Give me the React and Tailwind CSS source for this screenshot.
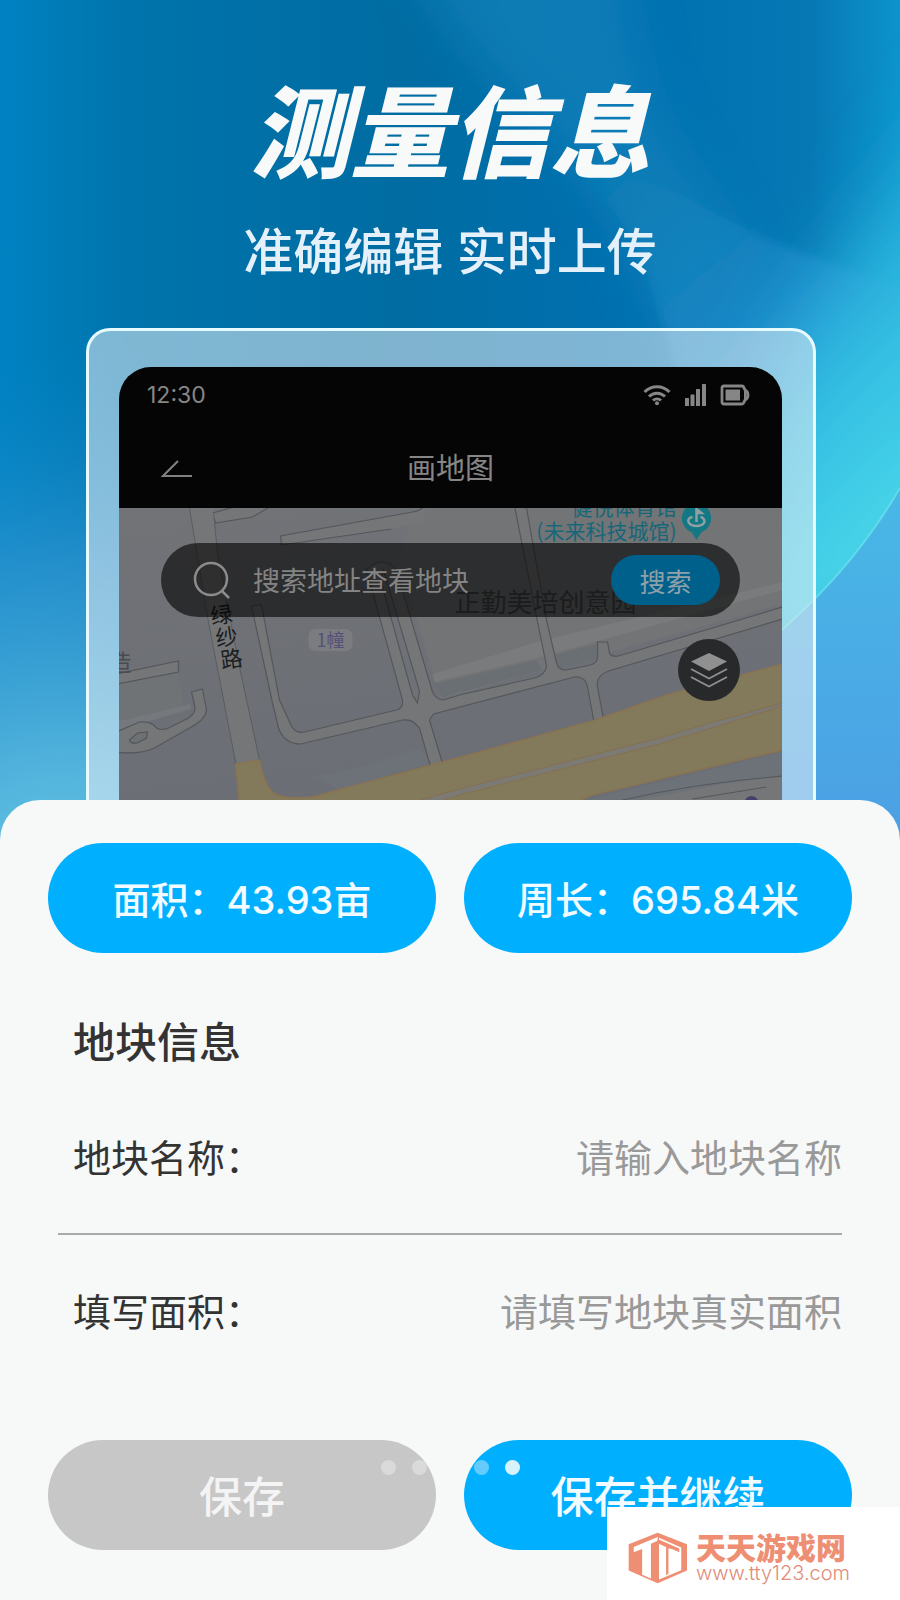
import React, { useState } from "react";

const DOTS = [0, 1, 2, 3, 4];

function Backdrop() {
  return (
    <svg
      className="absolute inset-x-0 top-0 h-[860px] w-full"
      viewBox="0 0 900 860"
      preserveAspectRatio="none"
      aria-hidden="true"
    >
      <defs>
        <linearGradient id="bg-base" x1="0" y1="0" x2="1" y2="0">
          <stop offset="0" stopColor="#0082c2" />
          <stop offset="0.14" stopColor="#0074ac" />
          <stop offset="0.45" stopColor="#006ca2" />
          <stop offset="0.7" stopColor="#0070b0" />
          <stop offset="0.9" stopColor="#0678b4" />
          <stop offset="1" stopColor="#0c94cc" />
        </linearGradient>
        <radialGradient id="bg-left" gradientUnits="userSpaceOnUse" cx="60" cy="900" r="560">
          <stop offset="0" stopColor="#6cc8e4" />
          <stop offset="0.25" stopColor="#50b2dc" />
          <stop offset="0.6" stopColor="#2c94d0" stopOpacity="0.8" />
          <stop offset="1" stopColor="#0080c4" stopOpacity="0" />
        </radialGradient>
        <linearGradient id="bg-blade" x1="0" y1="0" x2="0.6" y2="1">
          <stop offset="0" stopColor="#1080b4" stopOpacity="0.1" />
          <stop offset="0.2" stopColor="#1484bc" stopOpacity="0.5" />
          <stop offset="0.5" stopColor="#1e8acc" stopOpacity="0.9" />
          <stop offset="1" stopColor="#20a0d8" />
        </linearGradient>
        <linearGradient id="bg-cyan" x1="0.3" y1="0" x2="0.7" y2="1">
          <stop offset="0" stopColor="#20a4d4" stopOpacity="0" />
          <stop offset="0.5" stopColor="#34c0e4" />
          <stop offset="1" stopColor="#5ceaec" />
        </linearGradient>
        <linearGradient id="bg-corner" x1="0" y1="0" x2="0" y2="1">
          <stop offset="0" stopColor="#48b8e6" />
          <stop offset="1" stopColor="#4c9ee4" />
        </linearGradient>
        <filter id="blur-lg" x="-60%" y="-50%" width="220%" height="200%">
          <feGaussianBlur stdDeviation="38" />
        </filter>
        <filter id="blur-md" x="-50%" y="-50%" width="200%" height="200%">
          <feGaussianBlur stdDeviation="24" />
        </filter>
        <filter id="blur-sm" x="-20%" y="-20%" width="140%" height="140%">
          <feGaussianBlur stdDeviation="5" />
        </filter>
      </defs>
      <rect width="900" height="860" fill="url(#bg-base)" />
      <rect width="900" height="860" fill="url(#bg-left)" />
      <path
        d="M400 -60C450 60 560 130 600 200S650 290 668 340L720 560H820C800 380 760 260 700 180S640 60 620 -60Z"
        fill="#1484bc"
        opacity="0.6"
        filter="url(#blur-md)"
      />
      <path
        d="M560 160C610 200 640 240 652 290L672 350L720 700H960V300C860 280 760 240 700 205S600 180 560 160Z"
        fill="url(#bg-blade)"
        filter="url(#blur-sm)"
      />
      <path d="M990 60C920 150 880 200 820 280S745 430 720 700L980 560Z" fill="url(#bg-cyan)" filter="url(#blur-lg)" />
      <path d="M900 488C870 540 830 590 770 640L680 700V860H900Z" fill="url(#bg-corner)" />
      <path d="M900 488C870 540 830 590 770 640" fill="none" stroke="#7ceef0" strokeWidth="2" opacity="0.5" />
    </svg>
  );
}

function WifiIcon() {
  return (
    <svg width="28" height="22" viewBox="0 0 28 22" fill="none" stroke="#868686" strokeWidth="3" aria-hidden="true">
      <path d="M1.5 8C8.500 1 19.500 1 26.500 8" />
      <path d="M6 12.500C10.500 8 17.500 8 22 12.500" />
      <path d="M10 16.500C12.300 14.400 15.700 14.400 18 16.500" />
      <circle cx="14" cy="19.200" r="2" fill="#868686" stroke="none" />
    </svg>
  );
}

function SignalIcon() {
  return (
    <svg width="21" height="22" viewBox="0 0 21 22" fill="#868686" aria-hidden="true">
      <rect x="0" y="14" width="4" height="8" rx="0.500" />
      <rect x="5.500" y="10.500" width="4" height="11.500" rx="0.500" />
      <rect x="11" y="5" width="4" height="17" rx="0.500" />
      <rect x="17" y="0" width="4" height="22" rx="0.500" />
    </svg>
  );
}

function BatteryIcon() {
  return (
    <svg width="30" height="22" viewBox="0 0 30 22" aria-hidden="true">
      <path
        d="M4 2H22Q23.500 2 24 4L25 6Q28 7.500 28 11T25 16L24 18Q23.500 20 22 20H4Q2 20 2 18V4Q2 2 4 2Z"
        fill="none"
        stroke="#868686"
        strokeWidth="2.800"
      />
      <path d="M5.500 5.500H20V16.500H5.500ZM24 6L26.500 8V14L24 16Z" fill="#868686" />
    </svg>
  );
}

function CityMap() {
  return (
    <svg
      className="absolute inset-0 h-full w-full"
      viewBox="0 0 664 292"
      preserveAspectRatio="xMidYMid slice"
      fontFamily='"Noto Sans CJK SC", sans-serif'
      aria-hidden="true"
    >
      <defs>
        <linearGradient id="land" x1="0" y1="0" x2="0.3" y2="1">
          <stop offset="0" stopColor="#717377" />
          <stop offset="1" stopColor="#6b6e75" />
        </linearGradient>
      </defs>
      <rect width="664" height="292" fill="url(#land)" />
      <path d="M296 0H664V96L341 186L322 190L280 52Z" fill="#727476" />
      <path d="M0 175L60 165L66 205L0 215Z" fill="#6f7376" />
      <path d="M0 213L72 196V201L0 222Z" fill="#75787c" />
      <path d="M314 166L418 134L664 74V82L418 150L316 174Z" fill="#797b7c" />
      <path d="M316 176L418 152L424 162L324 189ZM432 148L478 136V150L442 160Z" fill="#6a6f74" />
      <path d="M196 268Q240 262 300 240L318 254L220 282Z" fill="#6d7178" />

      {/* side roads */}
      <g fill="#757677" stroke="#54575b" strokeWidth="1.2">
        <path d="M94 5L116 -1H151L134 9L97 15Z" />
        <path d="M163 37L162 28L294 4L306 -2V14L273 21Z" stroke="none" />
        <path d="M163 37L162 28L294 4Q302 3 306 -2M163 37L273 21" fill="none" />
        <path d="M-2 166L60 153V164L-2 176Z" />
        <path d="M73 184L84 181Q86 192 88 202Q87 212 71 220L36 240Q20 247 -2 244V224L21 214Q33 213 38 220Q43 223 50 220L70 210Q78 205 76 197Z" />
        <path d="M11 232L19 225L29 224L28 230L19 235Q12 236 11 232Z" fill="#6d7074" />
        <path d="M396 -2L418 109L428 158Q427 167 416 170L341 187L325 192Q318 192 314 184L278 62Q264 46 248 62L284 192Q285 200 278 202L186 224Q176 226 172 216L161 192L143 97L133 98L154 195L160 220Q166 236 182 236L284 212Q292 211 296 215L301 220L313 262H326L311 212L315 206L456 169Q467 168 469 179L477 222H487L479 179Q477 168 490 163L664 111V99L500 148Q492 149 491 145L489 134H479V149Q479 155 472 157L448 162Q440 162 438 155L428 112L408 0Z" />
        <path d="M265 62L301 183L299 195L294 187L262 72Z" fill="#6e7175" />
      </g>
      <path d="M71 0H94L99 45L121 159L141 254L118 259L89 109Z" fill="#757677" />
      <path d="M71 0L89 109L118 259M96 15L99 45L121 159L141 252" fill="none" stroke="#5a5c60" />

      {/* main avenue */}
      <path
        d="M117 256L141 252Q145 274 153 283T194 289L324 254L474 213L548 187L664 156V242L474 287L458 294H121Z"
        fill="#827a5b"
        stroke="#8a7352"
        strokeWidth="1.5"
      />
      <path d="M298 293L341 281L541 230L591 215L664 195V198L600 218L541 236L341 287L322 293Z" fill="#7b7a74" stroke="#86704f" />
      <path d="M460 294L664 244V270L526 294Z" fill="#6d7278" />
      <path d="M526 291L600 277L664 268V294H526Z" fill="#757677" />
      <path d="M500 293Q570 276 664 268M574 291L648 279" fill="none" stroke="#54575b" />
      <circle cx="633" cy="295" r="7" fill="#47406b" />

      {/* labels */}
      <text x="-10" y="163" fontSize="23" fill="#484b50">造</text>
      <rect x="190" y="121" width="44" height="22" rx="7" fill="#7a7c7f" />
      <text x="212" y="139" fontSize="18" textAnchor="middle" fill="#565078">1幢</text>
      <g fontSize="22" fill="#1c1d1f" textAnchor="middle">
        <text x="103" y="115" transform="rotate(-8 103 107)">绿</text>
        <text x="108" y="137" transform="rotate(-8 108 129)">纱</text>
        <text x="113" y="159" transform="rotate(-8 113 151)">路</text>
      </g>
      <g fontSize="21" fill="#176778" textAnchor="end">
        <text x="558" y="7">健悦体育馆</text>
        <text x="558" y="31">(未来科技城馆)</text>
      </g>
      <path d="M578 -5A15 15 0 0 1 583 24L578 32L573 24A15 15 0 0 1 578 -5Z" fill="#137884" />
      <path
        d="M578 14V1L583 5H578M574 9Q569 10 570 14Q572 18 578 18T586 14Q586 10 582 9"
        fill="none"
        stroke="#8fa0a2"
        strokeWidth="2.500"
      />
      <text x="336" y="104" fontSize="26" fill="#444648">正勤美培创意园</text>
    </svg>
  );
}

function LayersIcon() {
  return (
    <svg width="38" height="38" viewBox="0 0 38 38" fill="none" stroke="#909090" strokeWidth="1.800" aria-hidden="true">
      <path d="M19 2L37 10.500L19 20L1 10.500Z" fill="#909090" stroke="none" />
      <path d="M1 18L19 27.500L37 18M1 26L19 35.500L37 26" />
    </svg>
  );
}

function PhonePreview() {
  return (
    <div className="relative mr-[84px] ml-[86px] rounded-t-3xl border-x-3 border-t-3 border-[#e6faff] bg-[#e8eef4]/55 pt-9 pr-[31px] pl-[30px]">
      <div className="overflow-hidden rounded-t-[32px] bg-[#050505] text-[#868686]">
        <div className="flex h-[56px] items-center justify-between pr-8 pl-7">
          <span className="text-[23px]">12:30</span>
          <div className="flex items-center gap-[14px]">
            <WifiIcon />
            <SignalIcon />
            <BatteryIcon />
          </div>
        </div>
        <div className="grid h-[85px] grid-cols-[1fr_auto_1fr] items-center px-[42px] pt-1.5">
          <button type="button" aria-label="返回" className="justify-self-start">
            <svg width="31" height="18" viewBox="0 0 31 18" fill="none" stroke="#808080" strokeWidth="2.200">
              <path d="M17 1L2 16H31" />
            </svg>
          </button>
          <h2 className="text-[29px]">画地图</h2>
        </div>
        <div className="relative px-[42px] pt-[35px] pb-[99px]">
          <CityMap />
          <form
            className="relative flex h-[74px] items-center rounded-full bg-black/60 pr-5 pl-8"
            onSubmit={e => e.preventDefault()}
          >
            <svg width="38" height="40" viewBox="0 0 38 40" fill="none" stroke="#8c8c8c" strokeWidth="2.500" aria-hidden="true">
              <circle cx="18" cy="19" r="16" />
              <path d="M28.500 30.500L36 38" />
            </svg>
            <input
              type="search"
              aria-label="搜索地址查看地块"
              placeholder="搜索地址查看地块"
              className='ml-[22px] min-w-0 flex-1 bg-transparent font-["Noto_Sans_CJK_SC",sans-serif] text-[27px] outline-none placeholder:text-[#848484]'
            />
            <button
              type="submit"
              className='h-[50px] w-[109px] rounded-full bg-[#00608c] font-["Noto_Sans_CJK_SC",sans-serif] text-[26px] text-[#8fa0a8]'
            >
              搜索
            </button>
          </form>
          <button
            type="button"
            aria-label="图层"
            className="relative mt-[22px] ml-auto flex size-[62px] items-center justify-center rounded-full bg-[#28292b]"
          >
            <LayersIcon />
          </button>
        </div>
      </div>
    </div>
  );
}

function Stat({ children }) {
  return (
    <div className="flex h-[110px] flex-1 items-center justify-center rounded-full bg-[#00b0ff] pt-1 text-[38px] font-medium text-[#f2fbff]">
      {children}
    </div>
  );
}

function Field({ id, label, placeholder, value, onChange }) {
  return (
    <div className='flex h-[152px] items-center pb-1 pl-[15px] font-["Noto_Sans_CJK_SC",sans-serif] text-[38px] text-[#333]'>
      <label htmlFor={id} className="shrink-0">
        {label}
      </label>
      <input
        id={id}
        type="text"
        value={value}
        placeholder={placeholder}
        onChange={e => onChange(e.target.value)}
        className="min-w-0 flex-1 bg-transparent text-right outline-none placeholder:text-[#999]"
      />
    </div>
  );
}

function SiteBadge() {
  return (
    <a href="#site" className="absolute right-0 bottom-0 flex h-[93px] w-[293px] items-center gap-2 bg-white pt-2 pl-[21px] text-[#ee8e72]">
      <svg width="60" height="52" viewBox="86 99 178 154" aria-hidden="true">
        <path d="M174 101L261 135V213L174 251L88 213V135Z" fill="#ee8e72" />
        <path d="M103 143L174 114V125L154 134V237L128 226V149L103 159Z" fill="#fff" />
        <path d="M178 116L244 145V212L178 240Z" fill="#fff" />
        <path d="M174 120L238 148V159L218 150L206 147V223L199 227V143L174 132Z" fill="#ee8e72" />
      </svg>
      <span className="flex flex-col">
        <span className="text-[30px] leading-[30px] font-black">天天游戏网</span>
        <span className="text-xl leading-5 font-light text-[#e08c78]">www.tty123.com</span>
      </span>
    </a>
  );
}

export default function App() {
  const [name, setName] = useState("");
  const [area, setArea] = useState("");
  const [slide, setSlide] = useState(4);

  return (
    <main className='relative flex min-h-screen flex-col overflow-hidden bg-[#0070a8] font-[Inter,"Noto_Sans_CJK_SC",sans-serif]'>
      <Backdrop />

      <header className="relative flex flex-col items-center pt-[76px] pb-[36px]">
        <h1 className="text-[100px] leading-[116px] font-black text-[#f8fafa] italic">测量信息</h1>
        <p className="mt-5 text-[50px] leading-20 font-medium text-[#e4f0fa]">准确编辑 实时上传</p>
      </header>

      <PhonePreview />

      <section className="relative flex-1 rounded-t-[40px] bg-[#f7f8f8] px-12 pt-[43px] pb-[50px]">
        <div className="flex gap-7">
          <Stat>面积：43.93亩</Stat>
          <Stat>周长：695.84米</Stat>
        </div>

        <form onSubmit={e => e.preventDefault()}>
          <div className="px-[10px]">
            <h2 className="mt-[60px] pl-[15px] text-[42px] leading-[60px] font-medium text-[#333]">地块信息</h2>
            <div className="mt-2 border-b-2 border-[#aaa]">
              <Field id="plot-name" label="地块名称：" placeholder="请输入地块名称" value={name} onChange={setName} />
            </div>
            <Field id="plot-area" label="填写面积：" placeholder="请填写地块真实面积" value={area} onChange={setArea} />
          </div>
          <div className="mt-[53px] flex gap-7">
            <button type="button" className="h-[110px] flex-1 rounded-full bg-[#c7c7c7] pt-1 text-[43px] font-medium text-[#f4f4f4]">
              保存
            </button>
            <button type="submit" className="h-[110px] flex-1 rounded-full bg-[#00b0ff] pt-1 text-[43px] font-medium text-[#f2fbff]">
              保存并继续
            </button>
          </div>
        </form>
      </section>

      {/* carousel dots float over the slide */}
      <nav className="absolute inset-x-0 bottom-[125px] flex justify-center gap-4">
        {DOTS.map(i => (
          <button
            key={i}
            type="button"
            aria-label={`第${i + 1}页`}
            onClick={() => setSlide(i)}
            className={i === slide ? "size-[15px] rounded-full bg-[#d8f2fc]" : "size-[15px] rounded-full bg-[#f7f8f8]/40"}
          />
        ))}
      </nav>

      <SiteBadge />
    </main>
  );
}
